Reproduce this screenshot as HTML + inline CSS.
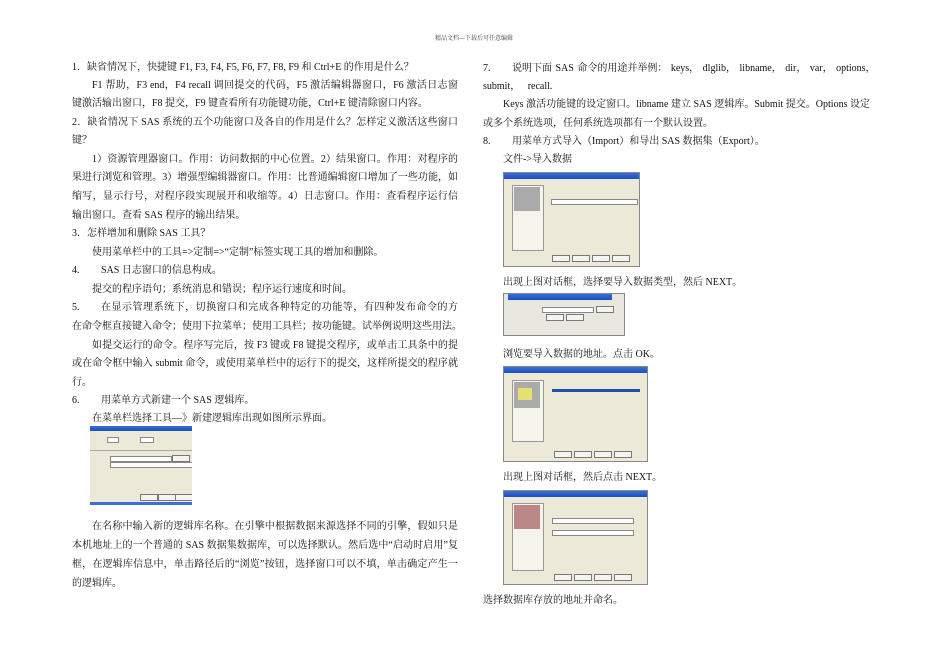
<!DOCTYPE html>
<html><head><meta charset="utf-8"><style>
body{margin:0;background:#fff;}
#p{position:relative;width:950px;height:672px;overflow:hidden;font-family:"Liberation Serif","Noto Serif CJK SC",serif;font-size:10px;color:#111;}
.l{position:absolute;line-height:14px;height:14px;white-space:nowrap;}
.j{text-align:justify;text-align-last:justify;white-space:normal;overflow:hidden;}
.img{position:absolute;background:#ece9d8;border:1px solid #888;overflow:hidden;}
.tb{position:absolute;left:0;right:0;top:0;height:7px;background:linear-gradient(#3a6fd8,#1c4fc0);}
.side{position:absolute;background:#f4f3ec;border:1px solid #999;}
.btn{position:absolute;height:5px;width:16px;border:1px solid #777;background:#f4f4f0;}
.fld{position:absolute;height:4px;background:#fff;border:1px solid #888;}
</style></head><body><div id="p">
<div class="l" style="left:435px;top:32px;font-size:6px;color:#444">精品文档---下载后可任意编辑</div>

<div class="l" style="left:72px;top:61px">1．缺省情况下，快捷键 F1, F3, F4, F5, F6, F7, F8, F9 和 Ctrl+E 的作用是什么？</div>
<div class="l j" style="left:92px;top:79px;width:366px">F1 帮助，F3 end，F4 recall 调回提交的代码，F5 激活编辑器窗口，F6 激活日志窗口，F7</div>
<div class="l" style="left:72px;top:97px">键激活输出窗口，F8 提交，F9 键查看所有功能键功能，Ctrl+E 键清除窗口内容。</div>
<div class="l j" style="left:72px;top:116px;width:386px">2．缺省情况下 SAS 系统的五个功能窗口及各自的作用是什么？怎样定义激活这些窗口的快捷</div>
<div class="l" style="left:72px;top:134px">键？</div>
<div class="l j" style="left:92px;top:153px;width:366px">1）资源管理器窗口。作用：访问数据的中心位置。2）结果窗口。作用：对程序的输出结</div>
<div class="l j" style="left:72px;top:171px;width:386px">果进行浏览和管理。3）增强型编辑器窗口。作用：比普通编辑窗口增加了一些功能，如定义</div>
<div class="l j" style="left:72px;top:190px;width:386px">缩写，显示行号，对程序段实现展开和收缩等。4）日志窗口。作用：查看程序运行信息。5）</div>
<div class="l" style="left:72px;top:209px">输出窗口。查看 SAS 程序的输出结果。</div>
<div class="l" style="left:72px;top:227px">3．怎样增加和删除 SAS 工具？</div>
<div class="l" style="left:92px;top:246px">使用菜单栏中的工具=&gt;定制=&gt;“定制”标签实现工具的增加和删除。</div>
<div class="l" style="left:72px;top:264px">4.</div><div class="l" style="left:101px;top:264px">SAS 日志窗口的信息构成。</div>
<div class="l" style="left:92px;top:283px">提交的程序语句；系统消息和错误；程序运行速度和时间。</div>
<div class="l" style="left:72px;top:301px">5.</div><div class="l j" style="left:101px;top:301px;width:357px">在显示管理系统下，切换窗口和完成各种特定的功能等，有四种发布命令的方式：即，</div>
<div class="l" style="left:72px;top:320px">在命令框直接键入命令；使用下拉菜单；使用工具栏；按功能键。试举例说明这些用法。</div>
<div class="l j" style="left:92px;top:339px;width:366px">如提交运行的命令。程序写完后，按 F3 键或 F8 键提交程序，或单击工具条中的提交按纽，</div>
<div class="l j" style="left:72px;top:357px;width:386px">或在命令框中输入 submit 命令，或使用菜单栏中的运行下的提交，这样所提交的程序就会被运</div>
<div class="l" style="left:72px;top:376px">行。</div>
<div class="l" style="left:72px;top:394px">6.</div><div class="l" style="left:101px;top:394px">用菜单方式新建一个 SAS 逻辑库。</div>
<div class="l" style="left:92px;top:412px">在菜单栏选择工具—》新建逻辑库出现如图所示界面。</div>

<div class="img" style="left:90px;top:426px;width:102px;height:79px;border:none">
<div class="tb" style="height:5px"></div>
<div class="fld" style="left:17px;top:11px;width:10px"></div><div class="fld" style="left:50px;top:11px;width:12px"></div>
<div style="position:absolute;left:0;right:0;top:24px;border-top:1px solid #aaa"></div>
<div class="fld" style="left:20px;top:30px;width:60px"></div><div class="btn" style="left:82px;top:29px"></div>
<div class="fld" style="left:20px;top:36px;width:82px"></div>
<div class="btn" style="left:50px;top:68px"></div><div class="btn" style="left:68px;top:68px"></div><div class="btn" style="left:85px;top:68px"></div>
<div style="position:absolute;left:0;right:0;bottom:0;height:3px;background:#3a6fd8"></div>
</div>

<div class="l j" style="left:92px;top:520px;width:366px">在名称中输入新的逻辑库名称。在引擎中根据数据来源选择不同的引擎，假如只是想建立</div>
<div class="l j" style="left:72px;top:539px;width:386px">本机地址上的一个普通的 SAS 数据集数据库，可以选择默认。然后选中“启动时启用”复选</div>
<div class="l j" style="left:72px;top:558px;width:386px">框，在逻辑库信息中，单击路径后的“浏览”按钮，选择窗口可以不填，单击确定产生一个新</div>
<div class="l" style="left:72px;top:577px">的逻辑库。</div>

<div class="l" style="left:483px;top:62px">7.</div>
<div class="l" style="left:512px;top:62px;word-spacing:1px">说明下面 SAS 命令的用途并举例： keys， dlglib， libname， dir， var， options，</div>
<div class="l" style="left:483px;top:80px">submit，&nbsp;&nbsp; recall.</div>
<div class="l j" style="left:503px;top:98px;width:367px">Keys 激活功能键的设定窗口。libname 建立 SAS 逻辑库。Submit 提交。Options 设定一个</div>
<div class="l" style="left:483px;top:117px">或多个系统选项，任何系统选项都有一个默认设置。</div>
<div class="l" style="left:483px;top:135px">8.</div><div class="l" style="left:512px;top:135px">用菜单方式导入（Import）和导出 SAS 数据集（Export）。</div>
<div class="l" style="left:503px;top:153px">文件-&gt;导入数据</div>

<div class="img" style="left:503px;top:172px;width:135px;height:93px">
<div class="tb" style="height:6px"></div>
<div class="side" style="left:8px;top:12px;width:30px;height:64px"></div>
<div style="position:absolute;left:10px;top:14px;width:26px;height:24px;background:#aaa"></div>
<div class="fld" style="left:47px;top:26px;width:85px"></div>
<div class="btn" style="left:48px;top:82px"></div><div class="btn" style="left:68px;top:82px"></div><div class="btn" style="left:88px;top:82px"></div><div class="btn" style="left:108px;top:82px"></div>
</div>
<div class="l" style="left:503px;top:276px">出现上图对话框，选择要导入数据类型，然后 NEXT。</div>

<div class="img" style="left:503px;top:293px;width:120px;height:41px;background:#e8e8e0">
<div class="tb" style="left:4px;height:6px;right:12px"></div>
<div class="fld" style="left:38px;top:13px;width:50px"></div><div class="btn" style="left:92px;top:12px"></div>
<div class="btn" style="left:42px;top:20px"></div><div class="btn" style="left:62px;top:20px"></div>
</div>
<div class="l" style="left:503px;top:348px">浏览要导入数据的地址。点击 OK。</div>

<div class="img" style="left:503px;top:366px;width:143px;height:94px">
<div class="tb" style="height:6px"></div>
<div class="side" style="left:8px;top:13px;width:30px;height:60px"></div>
<div style="position:absolute;left:10px;top:15px;width:26px;height:26px;background:#aaa"></div>
<div style="position:absolute;left:14px;top:21px;width:14px;height:12px;background:#e6e070"></div>
<div style="position:absolute;left:48px;top:22px;width:88px;height:3px;background:#2050b0"></div>
<div class="btn" style="left:50px;top:84px"></div><div class="btn" style="left:70px;top:84px"></div><div class="btn" style="left:90px;top:84px"></div><div class="btn" style="left:110px;top:84px"></div>
</div>
<div class="l" style="left:503px;top:471px">出现上图对话框，然后点击 NEXT。</div>

<div class="img" style="left:503px;top:490px;width:143px;height:93px">
<div class="tb" style="height:6px"></div>
<div class="side" style="left:8px;top:12px;width:30px;height:66px"></div>
<div style="position:absolute;left:10px;top:14px;width:26px;height:24px;background:#b88;"></div>
<div class="fld" style="left:48px;top:27px;width:80px"></div><div class="fld" style="left:48px;top:39px;width:80px"></div>
<div class="btn" style="left:50px;top:83px"></div><div class="btn" style="left:70px;top:83px"></div><div class="btn" style="left:90px;top:83px"></div><div class="btn" style="left:110px;top:83px"></div>
</div>
<div class="l" style="left:483px;top:594px">选择数据库存放的地址并命名。</div>
</div></body></html>
